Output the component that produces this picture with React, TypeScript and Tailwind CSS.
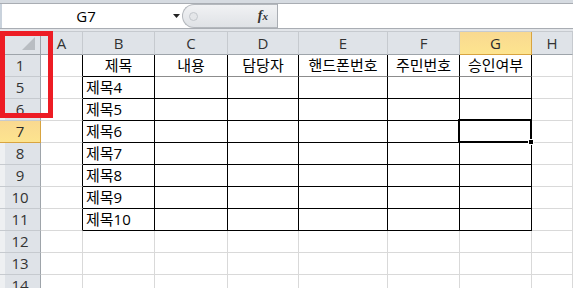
import React from "react";

const COLS = ["A", "B", "C", "D", "E", "F", "G", "H"];
const ROWS = ["1", "5", "6", "7", "8", "9", "10", "11", "12", "13", "14"];

// text by row label, column letter
const DATA: Record<string, Record<string, string>> = {
  "1": { B: "제목", C: "내용", D: "담당자", E: "핸드폰번호", F: "주민번호", G: "승인여부" },
  "5": { B: "제목4" },
  "6": { B: "제목5" },
  "7": { B: "제목6" },
  "8": { B: "제목7" },
  "9": { B: "제목8" },
  "10": { B: "제목9" },
  "11": { B: "제목10" },
};

const TABLE_ROWS = 8; // rows 1..11 carry the bordered table

function Cell({ r, c }: { r: number; c: number }) {
  const row = ROWS[r];
  const col = COLS[c];
  const text = DATA[row]?.[col] ?? "";
  const inTable = r < TABLE_ROWS;
  const blackRight = inTable && c <= 6;
  const blackBottom = inTable && c >= 1 && c <= 6 && !(r === 0 && c >= 2);
  const grayBottom = r === 0 && c >= 2 && c <= 6;
  const rightCls = blackRight ? "border-r-black" : "border-r-[#d9d9d9]";
  const bottomCls = blackBottom
    ? "border-b-black"
    : grayBottom
    ? "border-b-[#8c8c8c]"
    : "border-b-[#d9d9d9]";
  const header = r === 0;
  const selected = row === "7" && col === "G";
  return (
    <div
      className={`relative h-[22px] border-r border-b bg-white ${rightCls} ${bottomCls} flex items-center overflow-visible whitespace-nowrap text-[15px] leading-none text-black ${
        header ? "justify-center" : "pl-[3px]"
      }`}
    >
      {text}
      {selected && (
        <div className="absolute -left-[2px] -top-[2px] -right-[1px] -bottom-[1px] z-10 border-2 border-black">
          <div className="absolute -right-[4px] -bottom-[4px] h-[6px] w-[6px] border border-white bg-black" />
        </div>
      )}
    </div>
  );
}

function RowHead({ label, active }: { label: string; active: boolean }) {
  return (
    <div
      className={`flex h-[22px] items-center justify-center border-b border-r text-[15px] leading-none ${
        active
          ? "bg-gradient-to-b from-[#f9d990] to-[#fde48f] border-r-[#d8a440] border-b-[#d8a440] text-[#2b2b2b]"
          : "bg-[#dfe3e8] shadow-[inset_5px_0_0_#eef0f2] border-r-[#9ea4aa] border-b-[#c6cacf] text-[#333]"
      }`}
    >
      {label}
    </div>
  );
}

function ColHead({ label, active }: { label: string; active: boolean }) {
  return (
    <div
      className={`flex h-[23px] items-center justify-center border-b border-r text-[15px] leading-none ${
        active
          ? "bg-gradient-to-b from-[#f9d990] to-[#fde48f] border-r-[#d8a440] border-b-[#d8a440] text-[#2b2b2b]"
          : "bg-[#dfe3e8] border-r-[#c6cacf] border-b-[#9ea4aa] text-[#333]"
      }`}
    >
      {label}
    </div>
  );
}

export default function App() {
  return (
    <div className="relative h-[288px] w-[573px] overflow-hidden bg-white font-['Open_Sans','Noto_Sans_CJK_KR',sans-serif]">
      {/* ribbon edge */}
      <div className="h-[3px] bg-[#d6dbe1]" />

      {/* name box + formula bar */}
      <div className="flex h-[26px] border-y border-[#a9adb3] bg-white">
        <div className="w-[2px] bg-[#c9d2dc]" />
        <div className="flex w-[168px] items-center justify-center text-[15px] leading-none text-black">
          G7
        </div>
        <div className="flex w-[12px] items-center justify-center">
          <svg width="7" height="4" viewBox="0 0 7 4">
            <path d="M0 0h7L3.5 4z" fill="#222" />
          </svg>
        </div>
        <div className="my-auto flex h-[24px] w-[95px] items-center rounded-l-[12px] border border-r-0 border-[#b4b8bd] bg-gradient-to-b from-[#f1f2f4] to-[#dfe2e6] pl-[6px]">
          <div className="h-[9px] w-[9px] rounded-full border border-[#c3c7cc] bg-[#e4e6e9]" />
          <div className="ml-auto mr-[9px] font-['Liberation_Serif',serif] text-[14px] font-bold italic leading-none text-[#333]">
            f<span className="text-[11px]">x</span>
          </div>
        </div>
        <div className="w-px bg-[#a9adb3]" />
        <div className="flex-1 bg-white" />
      </div>

      <div className="h-[3px] border-b border-[#c6cacf] bg-[#e3e6ea]" />

      {/* sheet grid */}
      <div className="grid grid-cols-[41px_42px_72px_73px_71px_89px_72px_72px_41px]">
        <div className="relative h-[23px] border-b border-r border-b-[#9ea4aa] border-r-[#9ea4aa] bg-[#dfe3e8]">
          <svg className="absolute left-[22px] top-[5px]" width="13" height="13" viewBox="0 0 13 13">
            <path d="M13 0V13H0z" fill="#b9bdc2" />
          </svg>
        </div>
        {COLS.map((c) => (
          <ColHead key={c} label={c} active={c === "G"} />
        ))}
        {ROWS.map((row, r) => (
          <React.Fragment key={row}>
            <RowHead label={row} active={row === "7"} />
            {COLS.map((col, c) => (
              <Cell key={col} r={r} c={c} />
            ))}
          </React.Fragment>
        ))}
      </div>

      {/* red highlight frame */}
      <div className="absolute left-0 top-[31px] z-20 h-[87px] w-[53px] border-[5px] border-[#ed1c24]" />
    </div>
  );
}
